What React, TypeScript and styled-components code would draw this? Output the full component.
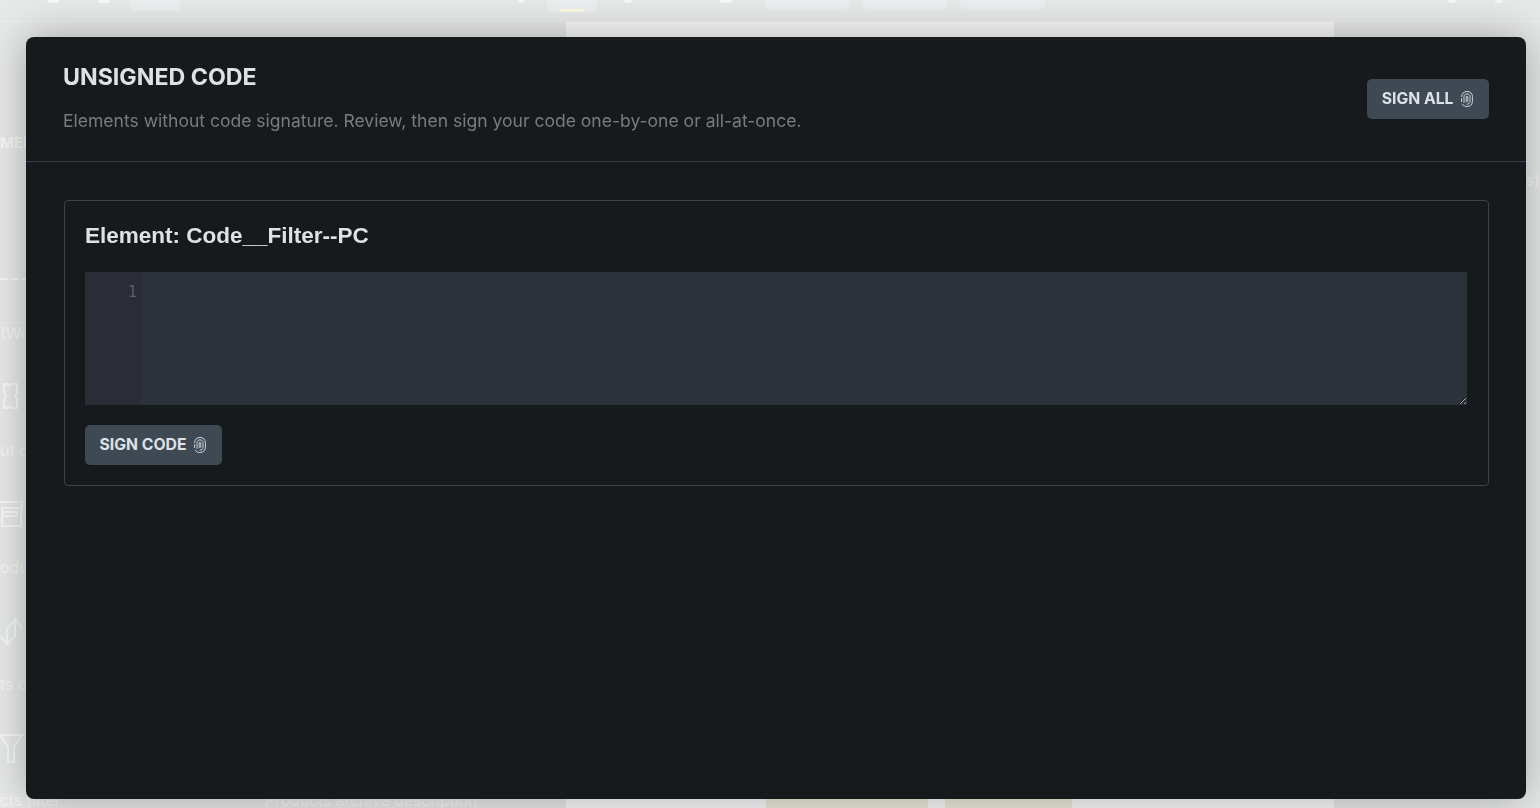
import React from 'react';
import styled, { createGlobalStyle } from 'styled-components';

const GlobalStyle = createGlobalStyle`
  html, body {
    margin: 0;
    padding: 0;
    height: 100%;
    overflow: hidden;
    background: #e7e9e8;
    font-family: Inter, "Liberation Sans", sans-serif;
  }
`;

const Page = styled.div`
  width: 1540px;
  height: 808px;
  display: flex;
  flex-direction: column;
  overflow: hidden;
  background: #e7e9e8;
`;

const Toolbar = styled.div`
  height: 22px;
  flex: none;
  display: flex;
  align-items: flex-start;
  box-sizing: border-box;
  border-bottom: 1px solid #edefee;
`;

const ToolMark = styled.div<{ $w: number; $before: number }>`
  width: ${(p) => p.$w}px;
  height: 3px;
  margin-left: ${(p) => p.$before}px;
  background: #f6f7f7;
  border-radius: 0 0 3px 3px;
`;

const ToolPill = styled.div<{ $w: number; $h: number; $before: number; $active?: boolean }>`
  position: relative;
  width: ${(p) => p.$w}px;
  height: ${(p) => p.$h}px;
  margin-left: ${(p) => p.$before}px;
  background: #ebedef;
  border-radius: 0 0 4px 4px;

  ${(p) =>
    p.$active &&
    `
    &::after {
      content: '';
      position: absolute;
      left: 13px;
      right: 13px;
      bottom: 0;
      height: 3px;
      background: #fdf8e2;
    }
  `}
`;

const Workspace = styled.div`
  flex: 1;
  display: flex;
  min-height: 0;
`;

const Sidebar = styled.div`
  width: 566px;
  flex: none;
  display: flex;
  flex-direction: column;
  overflow: hidden;
`;

const PanelHead = styled.div`
  height: 301px;
  flex: none;
  display: flex;
  flex-direction: column;
  padding-top: 112px;
  box-sizing: border-box;
  color: #f7f7f7;
  font: 700 15px/18px Inter, sans-serif;
  white-space: nowrap;
  border-bottom: 1px solid #eceeed;
`;

const Dashes = styled.div`
  margin-top: 126px;
  width: 26px;
  height: 2px;
  background: repeating-linear-gradient(90deg, #f4f5f5 0 8px, transparent 8px 11px);
`;

const WidgetRow = styled.div`
  height: 117px;
  flex: none;
  display: flex;
  flex-direction: column;
  box-sizing: border-box;
`;

const WidgetLabel = styled.div`
  height: 20px;
  flex: none;
  white-space: nowrap;
  color: #f5f5f5;
  font: 400 16px/20px Inter, sans-serif;
`;

const WidgetIcon = styled.div`
  height: 30px;
  flex: none;
  margin-top: 39px;
  color: #f6f7f7;
  filter: blur(0.4px);
`;

const LastRow = styled.div`
  display: flex;
  color: #f5f5f5;
  font: 400 15.7px/20px Inter, sans-serif;
  white-space: nowrap;
`;

const LastName = styled.span`
  width: 265px;
  flex: none;
`;

const Canvas = styled.div`
  width: 768px;
  flex: none;
  background: #f8f8f8;
  display: flex;
  flex-direction: column;
  justify-content: flex-end;
`;

const ThumbRow = styled.div`
  display: flex;
  gap: 17px;
  padding-left: 200px;
  height: 12px;
`;

const Thumb = styled.div<{ $w: number }>`
  width: ${(p) => p.$w}px;
  background: #ece8da;
`;

const RightPanel = styled.div`
  flex: 1;
  padding-top: 148px;
  box-sizing: border-box;
  color: #f5f5f5;
  font: 500 16px/20px Inter, sans-serif;
  text-align: right;
`;

const Modal = styled.div`
  position: fixed;
  left: 26px;
  top: 37px;
  width: 1500px;
  height: 762px;
  background: #161a1d;
  border-radius: 8px;
  box-shadow: 0 0 40px rgba(0, 0, 0, 0.3);
  display: flex;
  flex-direction: column;
  color: #dee2e6;
`;

const ModalHeader = styled.div`
  height: 125px;
  flex: none;
  box-sizing: border-box;
  padding: 0 37px;
  border-bottom: 1px solid #343b44;
  display: flex;
  align-items: center;
  justify-content: space-between;
`;

const HeaderText = styled.div`
  display: flex;
  flex-direction: column;
  gap: 16px;
  padding-bottom: 2px;
`;

const ModalTitle = styled.h2`
  margin: 0;
  font: 700 23.2px/30px Inter, sans-serif;
  color: #dee2e6;
`;

const ModalHint = styled.p`
  margin: 0;
  font: 400 17.54px/26px Inter, sans-serif;
  color: #777c80;
`;

const ActionButton = styled.button`
  display: inline-flex;
  align-items: center;
  gap: 7.5px;
  height: 40px;
  padding: 0 16px 0 14.5px;
  border: none;
  border-radius: 5px;
  background: #3e4954;
  color: #dee2e6;
  font: 700 15.75px/20px Inter, sans-serif;
  cursor: pointer;
`;

const ModalBody = styled.div`
  padding: 38px 37px 38px 38px;
`;

const ElementCard = styled.div`
  height: 286px;
  box-sizing: border-box;
  padding: 20px 21px 20px 20px;
  border: 1px solid #3b444e;
  border-radius: 4px;
  display: flex;
  flex-direction: column;
  align-items: flex-start;
`;

const ElementTitle = styled.h3`
  margin: 0 0 21px;
  font: 700 22.5px/30px 'Liberation Sans', sans-serif;
  color: #dee2e6;
`;

const Editor = styled.div`
  align-self: stretch;
  display: flex;
  height: 133px;
  margin-bottom: 20px;
  background: #2b323a;
`;

const Gutter = styled.div`
  width: 56px;
  flex: none;
  box-sizing: border-box;
  padding: 10px 4px 0 0;
  background: #2a2d35;
  color: #5a6068;
  text-align: right;
  font: 400 15.5px/20px 'DejaVu Sans Mono', monospace;
`;

const CodeArea = styled.textarea`
  flex: 1;
  min-width: 0;
  margin: 0;
  padding: 10px;
  border: none;
  outline: none;
  resize: vertical;
  background: transparent;
  color: #dee2e6;
  color-scheme: dark;
  font: 400 15px/20px 'DejaVu Sans Mono', monospace;
`;

const FingerprintIcon = () => (
  <svg width="12" height="16" viewBox="0 0 12 16" fill="none" stroke="currentColor" strokeWidth="0.9" strokeLinecap="round">
    <path d="M.6 5.6C.6 2.4 2.8.5 6 .5s5.4 1.9 5.4 5.1v4.8c0 3.2-2.2 5.1-5.4 5.1-2.1 0-3.8-.8-4.7-2.3" />
    <path d="M.6 7.6v3" />
    <path d="M3 11.5V5.7C3 3.9 4.2 2.9 6 2.9s3 1 3 2.8v4.6c0 1.9-1.2 2.9-3 2.9" />
    <path d="M5.2 10.8V6c0-.5.3-.8.8-.8s.8.3.8.8v4.4" />
  </svg>
);

const sideIcons = [
  <svg key="ticket" width="20" height="30" viewBox="0 0 20 30" fill="none" stroke="currentColor" strokeWidth="2">
    <path d="M4 2h3c1 2 3 2 4 0h6v9c-2 1-2 5 0 6v9h-6c-1-2-3-2-4 0H4v-9c2-1 2-5 0-6V2z" />
  </svg>,
  <svg key="box" width="24" height="30" viewBox="0 0 24 30" fill="none" stroke="currentColor" strokeWidth="2">
    <path d="M0 3h22v6H2v18h19V9" />
    <path d="M3 13h14v4H3z" />
  </svg>,
  <svg key="arrows" width="24" height="30" viewBox="0 0 24 30" fill="none" stroke="currentColor" strokeWidth="2">
    <path d="M15 4v18M8 12l7-9 7 9" />
    <path d="M7 12v15M1 21l6 7 6-6" />
  </svg>,
  <svg key="funnel" width="24" height="30" viewBox="0 0 24 30" fill="none" stroke="currentColor" strokeWidth="2">
    <path d="M0 2h22L14 14v15H8V14z" />
  </svg>,
];

const widgetLabels = ['(WooCommerce)', 'ut of stock', 'oducts', 'ts on sale'];

const App: React.FC = () => {
  return (
    <>
      <GlobalStyle />
      <Page>
        <Toolbar>
          <ToolMark $w={12} $before={47} />
          <ToolMark $w={12} $before={39} />
          <ToolPill $w={50} $h={11} $before={20} />
          <ToolMark $w={6} $before={338} />
          <ToolPill $w={50} $h={12} $before={23} $active />
          <ToolMark $w={8} $before={27} />
          <ToolMark $w={12} $before={88} />
          <ToolPill $w={85} $h={9} $before={33} />
          <ToolPill $w={85} $h={9} $before={12} />
          <ToolPill $w={85} $h={9} $before={13} />
          <ToolMark $w={8} $before={403} />
          <ToolMark $w={8} $before={39} />
        </Toolbar>
        <Workspace>
          <Sidebar>
            <PanelHead>
              MENU
              <Dashes />
            </PanelHead>
            {widgetLabels.map((label, i) => (
              <WidgetRow key={label}>
                <WidgetLabel>{label}</WidgetLabel>
                <WidgetIcon>{sideIcons[i]}</WidgetIcon>
              </WidgetRow>
            ))}
            <LastRow>
              <LastName>cts filter</LastName>
              <span>Products archive description</span>
            </LastRow>
          </Sidebar>
          <Canvas>
            <ThumbRow>
              <Thumb $w={162} />
              <Thumb $w={127} />
            </ThumbRow>
          </Canvas>
          <RightPanel>(s)</RightPanel>
        </Workspace>
      </Page>
      <Modal>
        <ModalHeader>
          <HeaderText>
            <ModalTitle>UNSIGNED CODE</ModalTitle>
            <ModalHint>Elements without code signature. Review, then sign your code one-by-one or all-at-once.</ModalHint>
          </HeaderText>
          <ActionButton>
            SIGN ALL <FingerprintIcon />
          </ActionButton>
        </ModalHeader>
        <ModalBody>
          <ElementCard>
            <ElementTitle>Element: Code__Filter--PC</ElementTitle>
            <Editor>
              <Gutter>1</Gutter>
              <CodeArea defaultValue="" spellCheck={false} />
            </Editor>
            <ActionButton>
              SIGN CODE <FingerprintIcon />
            </ActionButton>
          </ElementCard>
        </ModalBody>
      </Modal>
    </>
  );
};

export default App;
